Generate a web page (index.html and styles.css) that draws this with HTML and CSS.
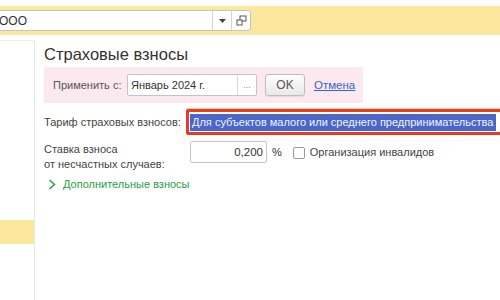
FILE: index.html
```html
<!DOCTYPE html>
<html lang="ru">
<head>
    <meta charset="UTF-8">
    <title>Страховые взносы</title>
    <link rel="stylesheet" href="styles.css">
</head>
<body>
    <div class="topbar">
        <div class="org-field">
            <span class="org-text">ООО</span>
            <span class="org-btn drop">
                <svg width="7" height="4" viewBox="0 0 7 4"><path d="M0 0h7L3.5 4z" fill="#444"/></svg>
            </span>
            <span class="org-btn">
                <svg width="11" height="11" viewBox="0 0 11 11"><rect x="4" y="1" width="6" height="5" fill="#fff" stroke="#555"/><rect x="1" y="5" width="5" height="5" fill="#fff" stroke="#555"/></svg>
            </span>
        </div>
    </div>

    <div class="main">
        <div class="side">
            <div class="side-item"></div>
        </div>

        <div class="content">
            <h1>Страховые взносы</h1>

            <div class="apply-box">
                <span class="label">Применить с:</span>
                <div class="date-field">
                    <span class="date-text">Январь 2024 г.</span>
                    <span class="date-btn">...</span>
                </div>
                <button class="ok-btn">OK</button>
                <a class="cancel" href="#">Отмена</a>
            </div>

            <div class="row tariff-row">
                <span class="label">Тариф страховых взносов:</span>
                <div class="tariff-wrap">
                    <div class="tariff-mark">
                        <div class="tariff-field"><span class="selected">Для субъектов малого или среднего предпринимательства</span></div>
                    </div>
                </div>
            </div>

            <div class="row rate-row">
                <span class="label two-line">Ставка взноса<br>от несчастных случаев:</span>
                <div class="rate-field">0,200</div>
                <span class="pct">%</span>
                <span class="checkbox"></span>
                <span class="check-label">Организация инвалидов</span>
            </div>

            <div class="extra">
                <svg width="8" height="11" viewBox="0 0 8 11"><path d="M1.5 1l5 4.5-5 4.5" fill="none" stroke="#27a045" stroke-width="1.5"/></svg>
                <span>Дополнительные взносы</span>
            </div>
        </div>
    </div>
</body>
</html>
```

FILE: styles.css
```css
body { margin: 0; background: #fff; font-family: "Liberation Sans", Arial, sans-serif; font-size: 11px; color: #444; overflow: hidden; }

.topbar { margin-top: 6px; height: 29px; background: #fbe89e; display: flex; align-items: center; }
.org-field { flex-shrink: 0; margin-left: -20px; width: 271px; height: 21px; box-sizing: border-box; background: #fff; border: 1px solid #c4c4c4; border-radius: 3px; display: flex; align-items: center; }
.org-text { flex: 1; padding-left: 18px; font-size: 12px; color: #333; }
.org-btn { width: 18px; height: 100%; border-left: 1px solid #d4d4d4; display: flex; align-items: center; justify-content: center; }

.main { display: flex; height: 265px; margin-top: 5px; }
.side { flex-shrink: 0; width: 35px; border-right: 1px solid #e6e6e6; border-top: 1px solid #ececec; padding-top: 179px; box-sizing: border-box; }
.side-item { height: 24px; background: #fbe89e; }

.content { flex: 1; min-width: 0; padding-left: 9px; }
.label { flex-shrink: 0; white-space: nowrap; }
h1 { margin: 4px 0 0 0; font-size: 16.5px; font-weight: normal; color: #333; line-height: 20px; }

.apply-box { margin-top: 3px; width: 319px; height: 36px; background: #fce9ef; display: flex; align-items: center; padding-left: 9px; box-sizing: border-box; }
.apply-box .label { color: #555; width: 74px; }
.date-field { flex-shrink: 0; width: 130px; height: 22px; box-sizing: border-box; border: 1px solid #c4c4c4; border-radius: 2px; background: #fff; display: flex; align-items: center; }
.date-text { flex: 1; padding-left: 3px; color: #333; }
.date-btn { width: 18px; height: 100%; border-left: 1px solid #d8d8d8; color: #888; font-size: 9px; display: flex; align-items: center; justify-content: center; }
.ok-btn { flex-shrink: 0; margin-left: 8px; width: 40px; height: 22px; border: 1px solid #bdbdbd; border-radius: 3px; background: linear-gradient(#fdfdfd, #e9e9e9); font-family: inherit; font-size: 12px; color: #555; padding: 0; box-shadow: 0 1px 1px rgba(0,0,0,0.08); }
.cancel { margin-left: 9px; color: #3465c9; font-size: 11.5px; }

.row { display: flex; align-items: center; }
.tariff-row { margin-top: 5px; }
.tariff-row .label { width: 142px; }
.tariff-wrap { flex: 1; min-width: 0; border-top: 1px solid #f5d56a; }
.tariff-mark { height: 26px; box-sizing: border-box; border: 3px solid #e43b2c; border-right: none; border-radius: 3px 0 0 3px; padding: 1px 0 1px 1px; }
.tariff-field { height: 100%; display: flex; align-items: center; background: #fff; white-space: nowrap; overflow: hidden; }
.selected { background: #4c66c7; color: #f2f4ff; padding: 2px 3px 3px 2px; }

.rate-row { margin-top: 6px; align-items: flex-start; }
.two-line { width: 146px; line-height: 15px; padding-top: 1px; }
.rate-field { flex-shrink: 0; width: 77px; height: 22px; box-sizing: border-box; border: 1px solid #c4c4c4; border-radius: 2px; text-align: right; line-height: 20px; padding-right: 3px; color: #333; font-size: 11.5px; }
.pct { margin-left: 5px; line-height: 22px; color: #333; }
.checkbox { flex-shrink: 0; margin: 6px 0 0 11px; width: 12px; height: 12px; box-sizing: border-box; border: 1px solid #9a9a9a; border-radius: 2px; background: #fff; }
.check-label { margin-left: 5px; line-height: 22px; white-space: nowrap; }

.extra { margin-top: 5px; margin-left: 4px; display: flex; align-items: center; gap: 7px; line-height: 14px; color: #27a045; }
```
